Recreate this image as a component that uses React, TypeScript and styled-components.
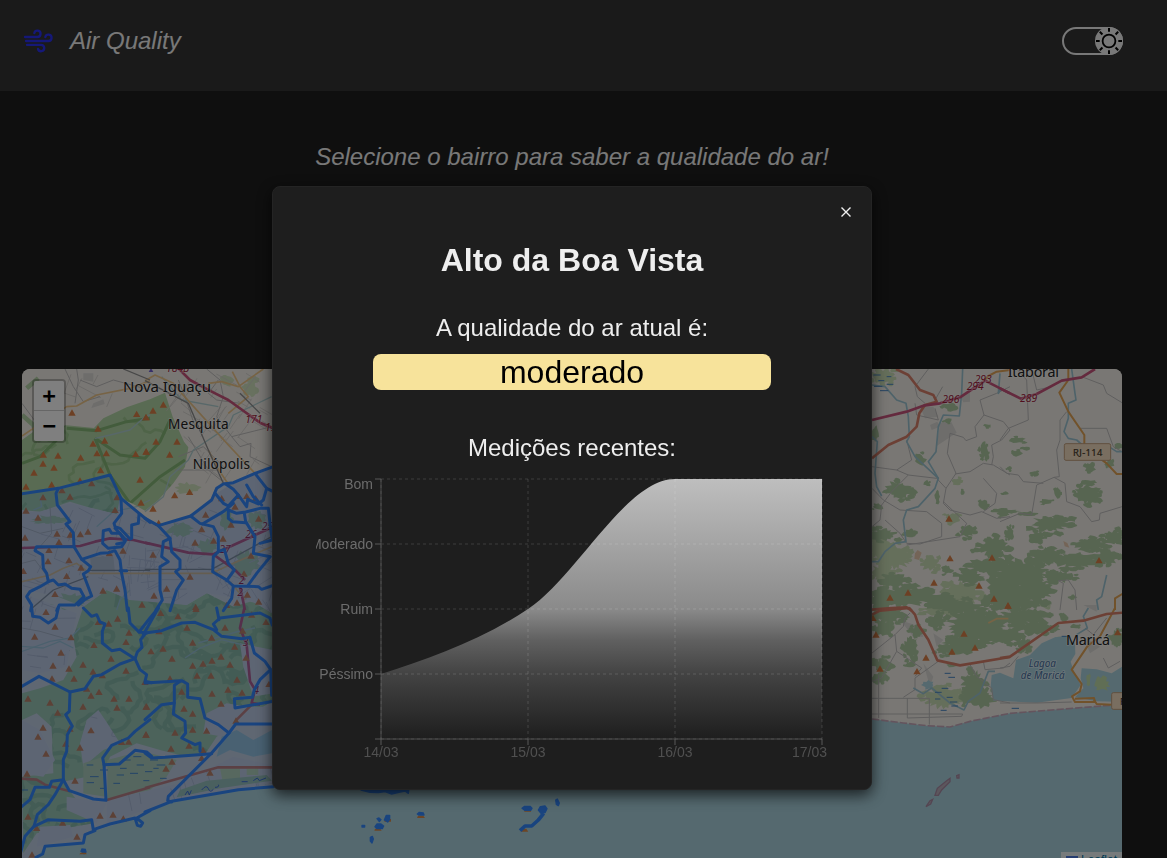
import React from "react";
import styled, { createGlobalStyle } from "styled-components";

const GlobalStyle = createGlobalStyle`
  * { box-sizing: border-box; }
  body {
    margin: 0;
    overflow: hidden;
    background: #1e1e1e;
    color: #f0f0f0;
    font-family: "Liberation Sans", Arial, sans-serif;
  }
  h1, h2, p { margin: 0; font-weight: 400; }
`;

const Page = styled.div`
  height: 100vh;
  overflow: hidden;
  background: #1e1e1e;
`;

const Header = styled.header`
  display: flex;
  justify-content: space-between;
  align-items: flex-start;
  height: 91px;
  padding: 27px 44px 0 22px;
  background: #343434;
`;

const Brand = styled.div`
  display: flex;
  align-items: center;
  gap: 16px;
  height: 28px;
  font-size: 24px;
  font-style: italic;
`;

const Toggle = styled.button`
  display: flex;
  justify-content: flex-end;
  align-items: center;
  width: 61px;
  height: 28px;
  padding: 0;
  border: 2px solid #f0f0f0;
  border-radius: 14px;
  background: #343434;
`;

const SunKnob = styled.svg`
  flex: none;
  margin-right: -2px;
`;

const Main = styled.main`
  display: flex;
  flex-direction: column;
  width: 1144px;
  padding: 52px 22px 0;
`;

const Lead = styled.h2`
  height: 226px;
  font-size: 24px;
  line-height: 28px;
  font-style: italic;
  text-align: center;
`;

const MapFrame = styled.section`
  position: relative;
  height: 500px;
  border-radius: 8px;
  overflow: hidden;
  background: #f2efe9;
`;

const MapCanvas = styled.svg`
  display: block;
  width: 1100px;
  height: 500px;
`;

const ZoomControl = styled.div`
  position: absolute;
  top: 10px;
  left: 10px;
  width: 34px;
  border: 2px solid rgba(0, 0, 0, 0.25);
  border-radius: 4px;
  background-clip: padding-box;
  overflow: hidden;
`;

const ZoomButton = styled.button<{ $divided?: boolean }>`
  display: block;
  width: 30px;
  height: 30px;
  padding: 0;
  border: 0;
  border-bottom: ${(p) => (p.$divided ? "1px solid #ccc" : "0")};
  background: #fff;
  color: #000;
  font: bold 22px/30px "DejaVu Sans Mono", "Liberation Mono", monospace;
`;

const Attribution = styled.div`
  position: absolute;
  right: 0;
  bottom: 0;
  display: flex;
  align-items: center;
  gap: 3px;
  width: 61px;
  height: 17px;
  padding: 0 0 1px 5px;
  background: rgba(255, 255, 255, 0.8);
  color: #0078a8;
  font-size: 12px;
`;

const Backdrop = styled.div`
  position: fixed;
  inset: 0;
  display: flex;
  align-items: flex-start;
  padding: 186px 0 0 272px;
  background: rgba(0, 0, 0, 0.5);
`;

const Dialog = styled.div`
  display: flex;
  flex-direction: column;
  align-items: center;
  width: 600px;
  height: 604px;
  border: 1px solid #242424;
  border-radius: 8px;
  background: #1e1e1e;
  color: #eee;
  box-shadow: 0 5px 15px rgba(0, 0, 0, 0.7);
`;

const CloseRow = styled.div`
  display: flex;
  justify-content: flex-end;
  width: 100%;
  height: 52px;
  padding: 15px 15px 0 0;
`;

const CloseButton = styled.button`
  width: 20px;
  height: 20px;
  padding: 0;
  border: 0;
  background: none;
  color: #f0f0f0;
`;

const District = styled.h1`
  font-size: 32px;
  line-height: 42px;
  font-weight: 700;
`;

const Caption = styled.p<{ $gap: number }>`
  margin-top: ${(p) => p.$gap}px;
  font-size: 24px;
  line-height: 28px;
`;

const Quality = styled.div`
  width: 398px;
  height: 36px;
  margin-top: 12px;
  border-radius: 8px;
  background: #f7e39b;
  color: #000;
  font-size: 32px;
  line-height: 36px;
  text-align: center;
`;

const Chart = styled.svg`
  flex: none;
  width: 512px;
  height: 300px;
  margin-top: 12px;
  font-size: 14px;
`;

/* ---------- map data, in map units (3 units per pixel) ---------- */

type Pt = [number, number];
const TILES: Record<string, Pt> = {
  a: [0, 0], b: [375, 0], c: [0, 744], d: [375, 744],
  e: [2520, 0], f: [2940, 0], g: [2520, 744], h: [2940, 744], s: [735, 300],
};

const seeded = (seed: number) => () => {
  seed = (seed * 16807) % 2147483647;
  return seed / 2147483647;
};

const blob = (cx: number, cy: number, rx: number, ry: number, seed: number) => {
  const r = seeded(seed * 97 + 13);
  r();
  let d = "";
  const n = Math.max(9, Math.round((rx + ry) / 2.2));
  for (let i = 0; i < n; i++) {
    const a = (i / n) * Math.PI * 2;
    const k = 0.6 + r() * 0.55;
    d += `${i ? "L" : "M"}${(cx + Math.cos(a) * rx * k).toFixed(0)} ${(cy + Math.sin(a) * ry * k).toFixed(0)}`;
  }
  return d + "Z";
};

/* a wood: one core with small outliers round its edge */
const wood = (cx: number, cy: number, rx: number, ry: number, seed: number) => {
  const r = seeded(seed * 311 + 7);
  r();
  let d = blob(cx, cy, rx, ry, seed);
  const n = rx + ry > 36 ? 8 : 2;
  for (let i = 0; i < n; i++) {
    const a = r() * 6.28;
    const k = 0.8 + r() * 0.45;
    const s = 0.14 + r() * 0.16;
    d += blob(cx + Math.cos(a) * rx * k, cy + Math.sin(a) * ry * k, rx * s + 3, ry * s + 2, seed + i);
  }
  return d;
};

const wander = (x0: number, y0: number, x1: number, y1: number, count: number, steps: number, len: number, seed: number) => {
  const r = seeded(seed);
  let d = "";
  for (let i = 0; i < count; i++) {
    let x = x0 + r() * (x1 - x0);
    let y = y0 + r() * (y1 - y0);
    let a = r() * 6.28;
    d += `M${x.toFixed(0)} ${y.toFixed(0)}`;
    for (let j = 0; j < steps; j++) {
      a += (r() - 0.5) * 2.2;
      x += Math.cos(a) * len;
      y += Math.sin(a) * len * 0.8;
      d += `L${x.toFixed(0)} ${y.toFixed(0)}`;
    }
  }
  return d;
};

const grid = (x0: number, y0: number, x1: number, y1: number, count: number, angle: number, seed: number) => {
  const r = seeded(seed);
  let d = "";
  for (let i = 0; i < count; i++) {
    const x = x0 + r() * (x1 - x0);
    const y = y0 + r() * (y1 - y0);
    const a = angle + (r() > 0.5 ? 1.57 : 0) + (r() - 0.5) * 0.25;
    const l = 25 + r() * 55;
    d += `M${x.toFixed(0)} ${y.toFixed(0)}l${(Math.cos(a) * l).toFixed(0)} ${(Math.sin(a) * l).toFixed(0)}`;
  }
  return d;
};

const BORDERS: Record<string, string[]> = {
  a: [
    "0,402 115,385 270,345 303,415 390,487",
    "115,385 108,400 112,435 135,465 150,485 138,492 160,518 162,560 185,598 212,620 205,632 190,642 215,708 195,718 175,735",
    "162,560 50,560 45,572 68,585 70,625 80,640 85,665 100,660 115,675 135,672 155,685 180,688 192,710 165,735 118,735 110,752",
    "85,665 60,680 30,695 20,710 35,735 32,752",
    "303,415 305,460 282,490 285,500 300,505 330,537 335,535 335,495 355,490 357,463",
    "285,505 318,540",
    "250,512 268,508 275,520 300,520 315,545 305,560 265,565 248,550 250,512",
    "290,552 310,548",
    "185,598 240,580 265,578 285,572 300,600 305,640 315,690 322,752",
    "300,632 320,632",
  ],
  b: [
    "0,475 40,497 137,468 200,420 215,385 235,372 265,368 330,340 385,320",
    "137,468 165,490 205,500 220,530 220,575 205,590 203,635 245,660 265,678 340,680 350,688 385,676",
    "40,497 75,535 80,575 105,600 105,625 92,635 115,660 95,690 75,752",
    "75,535 55,545 50,590 70,605 45,620 45,690 52,720 32,752",
    "210,400 235,430 250,438 280,405 305,440 308,418 340,432 355,420 365,385 330,340",
    "265,430 235,455 172,492",
    "250,450 275,460 302,456 345,445 370,445 376,500 382,540 345,550",
    "250,450 250,475 262,485 303,488",
    "298,460 302,485 330,530 325,580 376,590 335,640 310,675",
    "220,575 238,568 250,610 268,630 245,662",
    "265,678 260,715 235,752",
    "305,375 325,410 350,435",
    "242,372 265,388 280,405",
    "365,385 385,395",
  ],
  c: [
    "35,0 38,25 60,28 85,45 108,30 115,0",
    "190,0 215,25 230,20 240,42 255,48 247,70 247,105 275,128 300,124 345,152 360,185 380,200 375,220 395,224",
    "0,238 57,205 150,252 195,242 220,205 245,200 300,168 345,152 352,132 366,118 362,95 375,78",
    "325,0 330,45 357,72 380,75",
    "357,72 390,30 415,0",
    "150,252 148,310 137,320 157,355 142,380 140,430 130,455 130,515 95,520 88,538 45,538 30,575 0,600",
    "130,515 105,560 85,590 52,620 42,655 15,685 0,740",
    "130,515 148,548 220,573 258,577 252,470 248,450 275,412 325,390 345,370 390,335",
    "252,470 298,468 345,427 380,432 395,445",
    "42,655 85,635 180,640 215,635 220,665 270,648 345,630 352,652 362,655 368,645 350,630 390,608",
    "225,668 195,680 190,705 75,715 68,738 48,748",
  ],
  d: [
    "0,75 50,68 110,45 150,43 205,65 230,85 290,92 315,88 328,135 360,160 377,185 345,215 328,245 322,268 268,272 270,300 385,280",
    "215,65 205,48 225,30 345,15 375,30 382,52",
    "215,0 222,35",
    "0,225 110,218 128,228 128,268 165,272 180,330 220,350 252,375 200,435 70,565 68,578 80,582",
    "0,335 50,290 88,285 88,232 105,220",
    "88,285 85,318 120,340 122,375 110,390 150,410 165,405 165,430",
    "0,435 20,450 60,448 200,437",
    "252,375 272,348 385,348",
    "385,536 280,545 80,580 0,612",
    "377,185 380,262",
    "-5,80 40,0",
  ],
};

const PEAKS: Record<string, string> = {
  a: "156,158 350,162 378,172 234,206 254,242 219,251 231,280 259,280 347,282 378,275 70,284 114,287 182,293 69,311 102,323 42,338 242,331 360,359 18,380 95,374 180,362 215,370 126,391 69,412 150,410 291,412 285,450 363,428 54,473 18,452 15,533 111,521 117,546 151,524 181,523 204,515 87,570 84,604 147,601 309,572 10,633 183,623 140,648 105,702 249,692 290,686 366,734 268,580",
  b: "55,134 24,152 3,172 33,245 96,245 74,284 4,275 134,396 89,406 24,446 41,489 182,464 170,508 150,548 206,542 234,536 258,494 270,440 341,476 305,408 332,415 280,408 230,415 24,584 135,650 65,686 27,707 318,587 297,641 307,704 341,725 152,741 276,728 245,735",
  c: "78,12 105,56 44,86 153,88 123,134 266,47 293,32 327,74 318,102 222,111 273,152 99,173 147,182 189,170 219,191 162,212 96,212 318,188 200,242 237,252 213,263 282,272 327,272 291,299 189,296 24,272 90,284 113,314 378,296 150,362 69,359 54,386 213,367 180,419 78,437 21,497 165,518 326,401 378,380 137,407 24,626 240,623 279,620 171,686 128,644 36,740 310,632 50,660 375,222 247,202 235,42 305,402",
  d: "47,15 99,25 153,3 126,59 240,59 293,68 143,104 200,89 18,130 54,122 81,152 269,116 303,149 143,173 174,167 201,158 228,146 255,170 156,203 198,203 276,215 249,245 291,254 201,257 110,251 117,302 228,287 143,317 273,338 143,365 185,368 90,374 132,413 78,422 81,461 63,482 174,426 195,494 170,450 363,42 372,228 5,296 3,380 320,20 42,70 75,212",
  e: "267,476 270,595 396,593 222,668 144,698 90,713 357,677 402,716 444,737",
  f: "297,601 24,737",
  g: "39,30 48,80 60,182 198,149 171,190 312,77 276,131 345,119",
  h: "353,73",
};

const SCRUB: Record<string, number[][]> = {
  e: [
    [115, 390, 42, 28], [180, 298, 18, 18], [272, 140, 22, 14], [262, 182, 14, 9], [372, 270, 15, 24], [384, 198, 11, 6],
    [232, 410, 8, 20], [200, 370, 9, 10], [370, 436, 15, 16], [430, 460, 22, 12], [318, 515, 24, 18], [308, 398, 6, 8],
    [55, 440, 16, 10], [70, 525, 42, 20], [150, 520, 22, 12], [45, 220, 12, 24], [400, 560, 46, 30], [380, 620, 60, 26],
    [330, 650, 40, 20], [100, 660, 46, 22], [130, 710, 85, 34], [240, 725, 50, 26], [260, 630, 20, 12], [430, 690, 56, 62],
    [300, 740, 70, 22], [350, 570, 18, 10], [60, 715, 30, 36],
  ],
  f: [
    [50, 240, 26, 10], [48, 280, 18, 9], [78, 265, 12, 6], [28, 325, 9, 9], [105, 340, 15, 9], [270, 322, 18, 16],
    [265, 368, 26, 9], [262, 405, 42, 28], [172, 400, 11, 16], [140, 425, 24, 8], [150, 492, 58, 26], [110, 530, 24, 18],
    [30, 520, 12, 26], [25, 455, 38, 7], [85, 462, 28, 6], [15, 400, 12, 5], [270, 555, 50, 20], [340, 530, 36, 20],
    [220, 600, 90, 22], [320, 590, 40, 24], [140, 590, 50, 26], [70, 640, 80, 46], [100, 690, 66, 46], [40, 720, 60, 38],
    [180, 650, 46, 18], [330, 310, 14, 16], [355, 258, 14, 9], [218, 712, 14, 6],
  ],
  g: [
    [80, 20, 50, 26], [70, 60, 30, 28], [70, 170, 34, 20], [60, 210, 22, 18], [150, 120, 24, 34], [170, 70, 20, 18],
    [230, 40, 28, 24], [340, 50, 85, 56], [310, 110, 60, 28], [415, 90, 40, 16], [250, 125, 26, 16], [340, 225, 38, 36],
    [360, 270, 50, 32], [380, 60, 60, 40], [150, 170, 18, 8], [280, 170, 18, 8],
  ],
  h: [
    [45, 30, 50, 28], [100, 60, 50, 24], [30, 80, 44, 24], [110, 20, 40, 18], [70, 110, 26, 20], [160, 60, 22, 12],
    [350, 90, 22, 22], [225, 55, 14, 8], [190, 30, 12, 14],
  ],
};

const SCRUB_LIGHT: Record<string, number[][]> = {
  e: [[70, 50, 34, 26], [290, 365, 18, 12], [100, 590, 58, 40], [70, 640, 40, 30], [210, 610, 28, 24], [280, 475, 26, 16], [310, 700, 62, 34], [60, 560, 30, 25]],
  f: [[132, 732, 20, 14]],
  g: [[240, 10, 50, 16], [78, 26, 12, 14], [250, 268, 60, 36]],
  h: [[305, 228, 24, 26], [265, 215, 9, 22], [185, 92, 14, 9]],
};

const at = (k: string) => `translate(${TILES[k][0]} ${TILES[k][1]})`;

const TileStrokes = ({ data, color, width }: { data: [string, string][]; color: string; width: number }) => (
  <g fill="none" stroke={color} strokeWidth={width} strokeLinejoin="round">
    {data.map(([k, d], i) => (
      <polyline key={i} points={d} transform={at(k)} />
    ))}
  </g>
);

const MASSIF =
  "M6 240L40 215L140 196L222 204L250 175L320 142L390 118L435 98L458 170L492 245L505 262L495 320L460 370L415 420L375 452L335 430L303 415L300 465L200 440L150 425L60 455L6 450Z";
const RANGE =
  "M6 1000L60 985L130 960L170 890L160 830L190 740L260 690L330 720L420 720L500 735L560 700L640 740L690 725L760 740L760 1020L700 1060L640 1100L590 1130L560 1175L500 1190L420 1170L350 1150L270 1190L250 1240L130 1265L220 1390L50 1420L10 1480L6 1250L100 1240L95 1100L50 1060L6 1080Z";

const URBAN =
  "M6 455L60 455L150 430L290 462L300 415L375 475L415 497L510 468L590 400L640 368L756 325L756 760L690 720L560 700L500 735L330 720L260 690L190 740L100 705L6 690ZM6 700L170 760L140 920L60 940L6 930ZM200 1080L235 1050L262 1090L300 1150L250 1170L190 1220L180 1150ZM6 1080L60 1110L105 1200L70 1250L6 1240ZM260 1320L480 1270L640 1190L760 1215L760 1270L430 1330L260 1392ZM560 1060L620 1030L680 1040L760 1040L760 1100L640 1100L610 1130L550 1120ZM660 850L760 870L760 1000L700 1010L670 920ZM140 1310L260 1330L230 1390L140 1350ZM60 1400L150 1395L160 1430L50 1460Z";

const grayRoads: [string, string][] = [
  ["a", "6,130 50,190 70,235"], ["a", "135,27 160,80 190,125 240,110"], ["a", "180,60 230,80 280,60 390,90"], ["a", "170,27 175,60 165,130"],
  ["b", "185,27 225,60 235,110 215,170 260,230 285,260 318,250 315,290 380,320"], ["b", "130,230 190,330 240,370"], ["b", "100,60 120,110 150,200"],
  ["b", "220,60 190,100 215,120 285,130"], ["b", "100,290 175,260 235,320"], ["b", "90,330 220,330"], ["b", "260,230 380,200"],
  ["a", "6,500 60,520 130,505"], ["a", "90,440 95,520 60,560"], ["a", "6,610 45,600 90,660"], ["c", "6,60 60,70 130,90"],
  ["e", "165,130 170,165 235,180 225,145"], ["e", "205,27 165,80 172,110 195,130"], ["e", "248,80 225,120"],
  ["e", "36,320 110,330 145,345 230,355 258,385 288,340 262,280 270,220 310,232 318,242 350,230 345,200 372,165 360,120 410,100 450,80"],
  ["e", "110,330 155,300 140,240"], ["e", "145,345 95,395 65,435 60,480 36,500"], ["e", "36,385 70,420 120,450 200,455 245,490 245,530 180,552 140,550 120,520 75,480"],
  ["e", "285,342 330,335 370,310 400,315 450,345"], ["e", "258,385 250,430 270,450 330,465 365,455 410,475 450,470"], ["e", "370,355 410,400 405,430 370,455"],
  ["e", "372,165 430,185 450,210 425,240 395,255 400,290 395,315"], ["e", "250,425 320,490 300,530 140,555"],
  ["f", "50,27 80,60 85,180 25,205 0,240"], ["f", "95,27 110,90 155,80"], ["f", "200,155 180,180 180,240 170,270 178,350 162,352 110,375 95,465 60,460 0,485"],
  ["f", "0,320 20,340 55,345 70,365 130,370"], ["f", "162,352 195,370 200,425 240,440 275,485 298,480 300,460 366,440"], ["f", "240,205 320,205 340,260 366,275"],
  ["f", "245,50 310,75 320,100 366,128"], ["f", "180,750 190,670 175,662 205,660 225,690 230,750"],
  ["g", "36,135 105,80 130,55 135,30 150,15"], ["g", "105,80 110,130 185,180 165,205"], ["g", "142,270 142,330 305,325 308,318 142,318"], ["g", "36,318 142,318"],
  ["g", "36,271 208,271 208,350"], ["g", "56,200 56,330"], ["g", "110,130 65,210 36,220"], ["g", "235,160 165,210 165,245 130,268"], ["g", "330,170 350,205 395,240 400,275 450,285"], ["g", "370,160 375,185 430,180 450,165"],
  ["h", "0,285 110,285 215,282"], ["h", "0,180 30,175 55,145"], ["h", "255,60 280,80 320,30"], ["h", "310,150 325,180 360,160"],
];

const rivers: [string, string][] = [
  ["e", "36,75 75,80 110,120 138,130 145,170 148,230 140,245 165,290 235,355"], ["e", "308,27 305,100 298,168 250,165 235,200 228,275 205,305 235,355 225,385 175,440 140,450 130,480 138,545 105,550 75,575 55,605 36,605"],
  ["e", "36,230 52,245 45,340 50,380 65,408"], ["e", "420,40 415,100 425,85"], ["f", "215,27 225,100 228,120 205,130 205,175 192,215 205,235 230,240 255,262"],
  ["f", "320,645 305,710 290,720 295,750"], ["g", "160,240 190,257 215,240 270,285 312,306 325,280 360,255 385,190 405,190"],
  ["h", "265,0 250,25 262,60 230,80"], ["f", "330,262 350,275 366,275"],
];

const pale: [string, string][] = [
  ["a", "225,235 270,225 330,210 375,170 390,165"], ["b", "0,455 55,410 75,350 130,300 145,270 250,200 265,165 380,110"],
  ["b", "50,50 110,120 220,140"], ["c", "6,130 90,100 150,90 180,60"], ["c", "6,115 70,120 120,100 160,120"], ["d", "120,150 165,120 230,95 290,110"], ["d", "160,105 280,70 330,60"],
  ["a", "230,500 280,455 350,440 390,420"], ["a", "330,690 300,720 290,750"], ["a", "60,410 65,440 40,450"],
];

const Motorways = () => (
  <>
    <TileStrokes color="#efc78a" width={5} data={[
      ["a", "6,228 40,205 140,140 170,138 230,105 330,85 390,62"], ["b", "0,62 30,45 85,70 110,100 250,255 330,340"], ["b", "190,70 230,65 280,80 355,27"],
      ["b", "190,270 215,320 245,365 280,405"], ["b", "250,160 310,110 285,80 262,35"], ["a", "6,665 90,645 130,625 170,610 210,640 390,640"], ["b", "0,640 200,640 265,610 380,560"], ["b", "205,630 260,670 300,720"],
      ["g", "385,45 410,32 445,32"],
    ]} />
    <TileStrokes color="#e3a456" width={6} data={[
      ["e", "360,75 385,48 410,35 450,30"], ["f", "205,27 205,60 178,98 205,155 253,225 253,260 320,310 350,342 370,342"],
      ["h", "345,0 300,85 262,115 215,185 245,228 240,250 216,265 225,282 285,282 282,270 225,272"], ["h", "282,275 290,288 335,290"], ["f", "370,700 345,715 345,750"],
    ]} />
    <TileStrokes color="#8e8e8e" width={4} data={[["a", "310,27 390,60"], ["b", "0,62 130,130 190,270 235,370"], ["b", "0,628 200,628 380,530"], ["b", "285,100 345,160"], ["a", "205,631 390,631"], ["a", "30,750 100,690 205,650"]]} />
    <TileStrokes color="#d9806b" width={8} data={[
      ["e", "108,27 145,45 180,90 220,105 230,125 195,135 178,160 170,200 140,230 85,255 36,295"], ["e", "36,749 95,744 140,742 155,752"],
      ["g", "36,20 60,8 148,0 165,20 175,50 205,95 232,157 300,172 450,147"], ["h", "0,150 30,146 175,45 250,38 320,18 370,14"],
      ["c", "6,512 50,515 75,530 150,550"], ["c", "258,577 390,538"], ["d", "0,540 220,478 385,478"], ["d", "320,290 275,335"],
    ]} />
    <TileStrokes color="#c9547c" width={8} data={[
      ["e", "36,180 140,155 190,137 240,130 300,112 375,62 450,100"], ["f", "0,85 62,116 110,102 185,62 245,52 285,27"],
      ["b", "75,0 135,60 200,95 250,120 345,188 385,205"], ["a", "6,564 180,558 225,545 270,535 340,540 390,552"], ["b", "0,548 130,578 205,583 385,500"], ["b", "205,583 270,630 300,660"],
      ["b", "285,680 300,750"], ["d", "298,0 285,60 305,110 315,220 330,245"], ["d", "330,245 320,285 345,290"],
    ]} />
  </>
);

const MapLabels = () => (
  <g fontFamily='"Noto Sans", sans-serif' fontSize="45" fill="#222" stroke="#fff" strokeOpacity=".5" strokeWidth="5" paintOrder="stroke" strokeLinejoin="round">
    <text x="309" y="96" textLength="264">Nova Iguaçu</text>
    <text x="444" y="208" fontSize="41" textLength="182">Mesquita</text>
    <text x="518" y="326" fontSize="41" textLength="172">Nilópolis</text>
    <text x="2963" y="50" fontSize="43" textLength="154">Itaboraí</text>
    <text x="3138" y="855" fontSize="43" textLength="132">Maricá</text>
    <g fontSize="30" fontStyle="italic" fill="#486fa0">
      <text x="3026" y="922" textLength="82">Lagoa</text>
      <text x="3002" y="957" textLength="132">de Maricá</text>
    </g>
    <g fontSize="31" fontStyle="italic" fill="#a01c3c" strokeOpacity=".35">
      <text x="438" y="36">184B</text>
      <text x="676" y="189">171</text>
      <text x="735" y="214">15</text>
      <text x="676" y="535">26</text>
      <text x="725" y="510">25</text>
      <text x="598" y="578">27</text>
      <text x="656" y="672">2</text>
      <text x="652" y="708">2</text>
      <text x="668" y="857">3</text>
      <text x="700" y="1003">4</text>
      <text x="2864" y="70">293</text>
      <text x="2840" y="90">294</text>
      <text x="2767" y="129">296</text>
      <text x="3000" y="126">289</text>
    </g>
  </g>
);

const DistrictMap = () => (
  <MapCanvas viewBox="6 27 3300 1500">
    <defs>
      <clipPath id="hills"><path d={MASSIF + RANGE} /></clipPath>
      <clipPath id="urban"><path d={URBAN} /></clipPath>
      <path id="peak" d="M-11 9L0 -10L11 9Z" />
    </defs>
    <rect x="6" y="27" width="3300" height="1500" fill="#f2efe9" />
    <g fill="#dcdad7">
      <path d="M190 40l30 0l0 25l-30 -5zM220 130l30 -12l4 14l-40 12zM2760 190l30 -12l20 40l-60 40zM2730 195l22 -10l8 15l-25 10zM2820 105l30 -10l0 30l-20 2zM2700 140l40 0l15 30l-40 5z" />
      <path d="M2640 780l60 20l10 30l-30 0zM2740 820l30 20l-20 20zM3190 830l50 30l-30 20zM3190 735l40 0l0 20zM2710 910l30 40l-10 30z" />
    </g>
    <path d="M6 400L270 345L303 415L415 497L510 468L640 368L760 322L760 1285L600 1300L390 1352L225 1412L195 1424L190 1449L75 1459L60 1494L6 1494Z" fill="#e2e0df" />
    <path d={MASSIF + RANGE} fill="#b3d6a6" />
    <path d="M20 85L55 55M6 165L40 195L60 260L6 330" stroke="#b4d2a6" strokeWidth="14" fill="none" />
    <g clipPath="url(#hills)" fill="none" strokeLinejoin="round">
      <path d={wander(6, 470, 760, 1450, 110, 12, 15, 4211)} stroke="#8dbb8a" strokeWidth="13" opacity=".6" />
      <path d={wander(6, 120, 500, 450, 16, 9, 18, 7717)} stroke="#8fbe84" strokeWidth="8" opacity=".6" />
      <path d="M140 205L230 212L320 185L390 175M225 235L270 345L330 430M225 235L300 285L375 295L420 245L450 180M6 310L60 290L110 240M330 430L420 350L495 300" stroke="#86b878" strokeWidth="9" />
    </g>
    <g fill="#d0e2bf">
      <path d={blob(620, 60, 20, 20, 3) + blob(690, 85, 25, 26, 4) + blob(505, 385, 40, 18, 5)} />
      <path d={blob(700, 60, 20, 15, 9)} />
    </g>
    <path d={URBAN} fill="#dedde2" />
    <g clipPath="url(#urban)">
      <path d={blob(480, 510, 40, 22, 7) + blob(620, 480, 22, 30, 8) + blob(710, 480, 30, 28, 9) + blob(680, 610, 40, 36, 10) + blob(90, 480, 60, 14, 12) + blob(150, 725, 60, 24, 15) + blob(560, 560, 30, 24, 17)} fill="#b4d2ac" />
      <path d={grid(6, 440, 760, 760, 80, 0.35, 515) + grid(6, 760, 170, 940, 8, 0.1, 77) + grid(260, 1190, 760, 1390, 28, -0.25, 99) + grid(180, 1050, 300, 1220, 4, 0.3, 31)} stroke="#c0bfc8" strokeWidth="2.5" fill="none" />
      <path d={grid(320, 560, 480, 730, 22, 0, 56) + grid(380, 600, 740, 750, 20, -0.5, 12)} stroke="#c6c6d0" strokeWidth="3" fill="none" />
      <path d="M210 590H280L285 635H215Z" fill="#cacacb" />
    </g>
    <path d={grid(480, 40, 740, 320, 45, 0.6, 1234) + grid(120, 40, 300, 110, 6, 0.4, 44)} stroke="#d2cfcb" strokeWidth="2.5" fill="none" />
    <path d="M190 1210L250 1190L256 1310L190 1300ZM262 1200L340 1180L390 1180L470 1200L440 1250L390 1290L262 1318Z" fill="#c8dfae" />
    <path d="M600 1225H660V1260L610 1275Z M680 1225H715V1245H680Z" fill="#cfe3b0" />
    <path d="M480 1290L560 1262L740 1245L756 1262L600 1285L470 1312Z" fill="#aecfae" />
    <path d="M605 1130L650 1110L700 1140L756 1110L756 1180L700 1190L630 1170L590 1190Z" fill="#aad3df" />

    {Object.entries(SCRUB_LIGHT).map(([k, list]) => (
      <g key={k} transform={at(k)} fill="#cbdeb6">
        {list.map(([x, y, rx, ry], i) => <path key={i} d={wood(x, y, rx, ry, i + 31)} />)}
      </g>
    ))}
    {Object.entries(SCRUB).map(([k, list]) => (
      <g key={k} transform={at(k)} fill="#afcba3">
        {list.map(([x, y, rx, ry], i) => <path key={i} d={wood(x, y, rx, ry, i + 2)} />)}
      </g>
    ))}
    <path d="M2685 580l8 -10l12 8l-8 22l-14 -4zM3130 543l12 6l6 14l-14 -4z" fill="#e9c9ae" />

    <path d="M6 1530L50 1490L75 1459L190 1449L195 1424L225 1412L345 1374L390 1352L455 1324L655 1289L760 1281L1000 1200L2520 1070L2556 1077L2650 1089L2720 1097L2790 1101L2850 1084L2970 1060L3270 1036L3310 1034V1530Z" fill="#aad3df" />
    <path d="M2556 1077L2650 1089L2720 1097L2790 1101L2850 1084L2970 1060L3270 1036" fill="none" stroke="#c8a9bb" strokeWidth="5" strokeDasharray="22 6" />
    <path d="M2915 945L2940 938L2980 955L2988 900L3030 885L3065 850L3105 832L3140 828L3165 848L3166 882L3152 905L3160 930L3182 975L3155 1014L3050 1028L2920 1022L2912 980Z" fill="#aad3df" />
    <path d="M3185 925L3230 928L3275 940L3306 920V1005L3290 1025L3230 1024L3165 1012L3190 985L3182 955Z" fill="#aad3df" />
    <path d={blob(3245, 972, 24, 24, 31) + blob(3205, 958, 8, 22, 32)} fill="#c0dcaa" />
    <path d={blob(2725, 975, 22, 14, 52)} fill="#aad3df" />
    <g fill="#b9aebb" stroke="#a88ca5" strokeWidth="4">
      <path d="M2745 1306L2752 1285L2780 1262L2790 1255L2790 1265L2765 1290L2755 1306ZM2718 1340L2730 1322L2738 1318L2732 1332ZM2810 1247l7 -3l0 10l-6 0z" />
    </g>

    <TileStrokes color="#bfbdbd" width={3} data={grayRoads} />
    <TileStrokes color="#9cc5d3" width={5} data={rivers} />
    <TileStrokes color="#b1d0d2" width={4} data={pale} />
    <Motorways />

    <g stroke="#4b87c4" strokeWidth="3" fill="none">
      <path d="M2560 45h22M2575 62h18M2562 79h25M2600 73h20M2580 92h25M2600 50h14M2774 940h18M2785 952h20M2745 997h20M2765 985h20M2780 1012h18M2745 1017h16M2790 1026h22M2762 1051h18M2794 1038h20M3125 829h20M2975 1045h22" />
      <path d="M6 1290h18M200 1215h20M240 1230h24M210 1250h26M200 1268h22M240 1285h18M310 1200h22M340 1190h24M300 1225h20M350 1215h22M290 1245h22M330 1240h24M375 1235h22M400 1225h16M420 1255h20M370 1262h18M390 1200h24M410 1215h26M280 1270h20" />
      <path d="M495 1305l8 -12l5 12l6 -14M545 1290q15 -18 20 -4t15 2M585 1282q14 0 10 -8M665 1265h18M700 1262l12 -8l6 8l20 -8" stroke="#4068d0" />
    </g>
    <path d="M386 36l7 -12l7 12z" fill="#7060d0" />

    {Object.entries(PEAKS).map(([k, list]) => (
      <g key={k} transform={at(k)} fill="#da8148">
        {list.split(" ").map((p, i) => {
          const [x, y] = p.split(",");
          return <use key={i} href="#peak" x={x} y={y} />;
        })}
      </g>
    ))}
    <MapLabels />
    <g fontFamily='"Noto Sans", sans-serif' fontSize="28" fill="#453a2a">
      <rect x="3133" y="251" width="139" height="50" rx="5" fill="#f3dcc0" stroke="#c29f7d" strokeWidth="3" />
      <text x="3159" y="289" textLength="88" stroke="#453a2a" strokeWidth=".6">RJ-114</text>
      <rect x="3275" y="998" width="80" height="50" rx="5" fill="#f3dcc0" stroke="#c29f7d" strokeWidth="3" />
      <text x="3300" y="1036">RJ</text>
    </g>

    <path d="M6 400L115 385L270 345L303 415L415 497L512 468L575 420L590 385L640 368L705 340L760 320L760 1281L655 1289L455 1324L345 1374L225 1412L195 1424L190 1449L75 1459L48 1492L6 1520Z" fill="#3388ff" fillOpacity=".2" />
    <g fill="none" stroke="#3388ff" strokeWidth="9" strokeLinejoin="round" strokeLinecap="round">
      {Object.entries(BORDERS).map(([k, lines]) => (
        <g key={k} transform={at(k)}>
          {lines.map((l, i) => <polyline key={i} points={l} />)}
        </g>
      ))}
    </g>
    <g transform={at("s")}>
      <path d="M328 1112h22l-4 -6h-16zM456 1074h24l-5 -7h-16zM768 1115h22l-6 -9h-12zM358 1085h20v-8h-18zM778 1055h20v-5h-20z" fill="#d98b4a" />
      <g fill="#3388ff" stroke="#3388ff" strokeWidth="4" strokeLinejoin="round">
        <path d="M288 990L315 997L340 998L360 995L380 1002L405 996L420 993L430 1000L432 985H290Z" />
        <path d="M330 1100l6 -8h12l8 6l-4 8h-16zM358 1080l6 -14h10l0 12l-6 8zM336 1076l6 -2l6 5l-5 6zM291 1096h8v5h-8zM316 1132l6 -3l3 8l-4 12l-5 -6zM457 1062l6 -5l12 2l2 6h-16zM771 1045l8 -6h16l6 6l-4 6h-18zM820 1050l6 -10l14 -2l6 8l-6 12l-12 2zM872 1020l5 -3l6 12l-3 8l-6 -4z" />
        <path d="M836 1060L820 1080L800 1098L780 1098L765 1112" strokeWidth="11" fill="none" />
      </g>
    </g>
    <path d="M183 1474l3 -7l10 1l2 8l-6 5z" fill="#3388ff" stroke="#3388ff" strokeWidth="4" />
    <path d="M178 1483h22l-2 -5h-16z" fill="#d98b4a" />
  </MapCanvas>
);

const WindIcon = () => (
  <svg width="32" height="26" viewBox="66 84 96 78" fill="none" stroke="#2a30f0" strokeWidth="7" strokeLinecap="round">
    <path d="M75 111H112a9.500 9.500 0 1 0-9-12" />
    <path d="M78 123H145a9.500 9.500 0 1 0-9-12" />
    <path d="M81 134.500H123a9.500 9.500 0 1 1-9 12" />
  </svg>
);

const DAYS = ["14/03", "15/03", "16/03", "17/03"];
const LEVELS = ["Bom", "Moderado", "Ruim", "Péssimo"];

const HistoryChart = () => (
  <Chart viewBox="316 474 512 300">
    <defs>
      <linearGradient id="level" x1="0" y1="0" x2="0" y2="1">
        <stop offset="0" stopColor="#bebebe" />
        <stop offset=".25" stopColor="#a4a4a4" />
        <stop offset=".5" stopColor="#8a8a8a" />
        <stop offset=".62" stopColor="#606060" />
        <stop offset=".75" stopColor="#434343" />
        <stop offset="1" stopColor="#1e1e1e" />
      </linearGradient>
    </defs>
    <path d="M381 674C430 657.750 479 641.500 528 609C577 576.500 626 479 675 479H822V739H381Z" fill="url(#level)" />
    <g stroke="#fff" strokeOpacity=".14" strokeDasharray="3 3">
      {[479, 544, 609, 674, 739].map((y) => <line key={y} x1="381" x2="822" y1={y} y2={y} />)}
      {[381, 528, 675, 822].map((x) => <line key={x} x1={x} x2={x} y1="479" y2="739" />)}
    </g>
    <g stroke="#666" strokeOpacity=".8">
      <path d="M381 479V739H822" fill="none" strokeOpacity=".65" />
      {[479, 544, 609, 674, 739].map((y) => <line key={y} x1="375" x2="381" y1={y} y2={y} />)}
      {[381, 528, 675, 822].map((x) => <line key={x} x1={x} x2={x} y1="739" y2="745" />)}
    </g>
    <g fill="#6c6c6c" textAnchor="end">
      {LEVELS.map((t, i) => <text key={t} x="373" y={i ? 484 + 65 * i : 489}>{t}</text>)}
    </g>
    <g fill="#505050" textAnchor="middle">
      {DAYS.map((t, i) => <text key={t} x={i === 3 ? 809.5 : 381 + 147 * i} y="757">{t}</text>)}
    </g>
  </Chart>
);

export default function App() {
  return (
    <Page>
      <GlobalStyle />
      <Header>
        <Brand>
          <WindIcon />
          <span>Air Quality</span>
        </Brand>
        <Toggle aria-label="Tema">
          <SunKnob width="28" height="28" viewBox="-14 -14 28 28">
            <circle r="14" fill="#f0f0f0" />
            <circle r="6.400" fill="none" stroke="#000" strokeWidth="1.800" />
            {[0, 45, 90, 135, 180, 225, 270, 315].map((a) => (
              <line key={a} y1="-9.300" y2="-13" stroke="#000" strokeWidth="2" transform={`rotate(${a})`} />
            ))}
          </SunKnob>
        </Toggle>
      </Header>
      <Main>
        <Lead>Selecione o bairro para saber a qualidade do ar!</Lead>
        <MapFrame>
          <DistrictMap />
          <ZoomControl>
            <ZoomButton $divided>+</ZoomButton>
            <ZoomButton>−</ZoomButton>
          </ZoomControl>
          <Attribution>
            <svg width="12" height="8" viewBox="0 0 12 8">
              <path fill="#4c7be1" d="M0 0h12v4H0z" />
              <path fill="#ffd500" d="M0 4h12v4H0z" />
            </svg>
            <span>Leaflet</span>
          </Attribution>
        </MapFrame>
      </Main>
      <Backdrop>
        <Dialog role="dialog">
          <CloseRow>
            <CloseButton aria-label="Fechar">
              <svg width="20" height="20" viewBox="0 0 20 20" fill="none" stroke="currentColor" strokeWidth="1.400">
                <path d="M5.500 5.500l9 9M14.500 5.500l-9 9" />
              </svg>
            </CloseButton>
          </CloseRow>
          <District>Alto da Boa Vista</District>
          <Caption $gap={33}>A qualidade do ar atual é:</Caption>
          <Quality>moderado</Quality>
          <Caption $gap={44}>Medições recentes:</Caption>
          <HistoryChart />
        </Dialog>
      </Backdrop>
    </Page>
  );
}
